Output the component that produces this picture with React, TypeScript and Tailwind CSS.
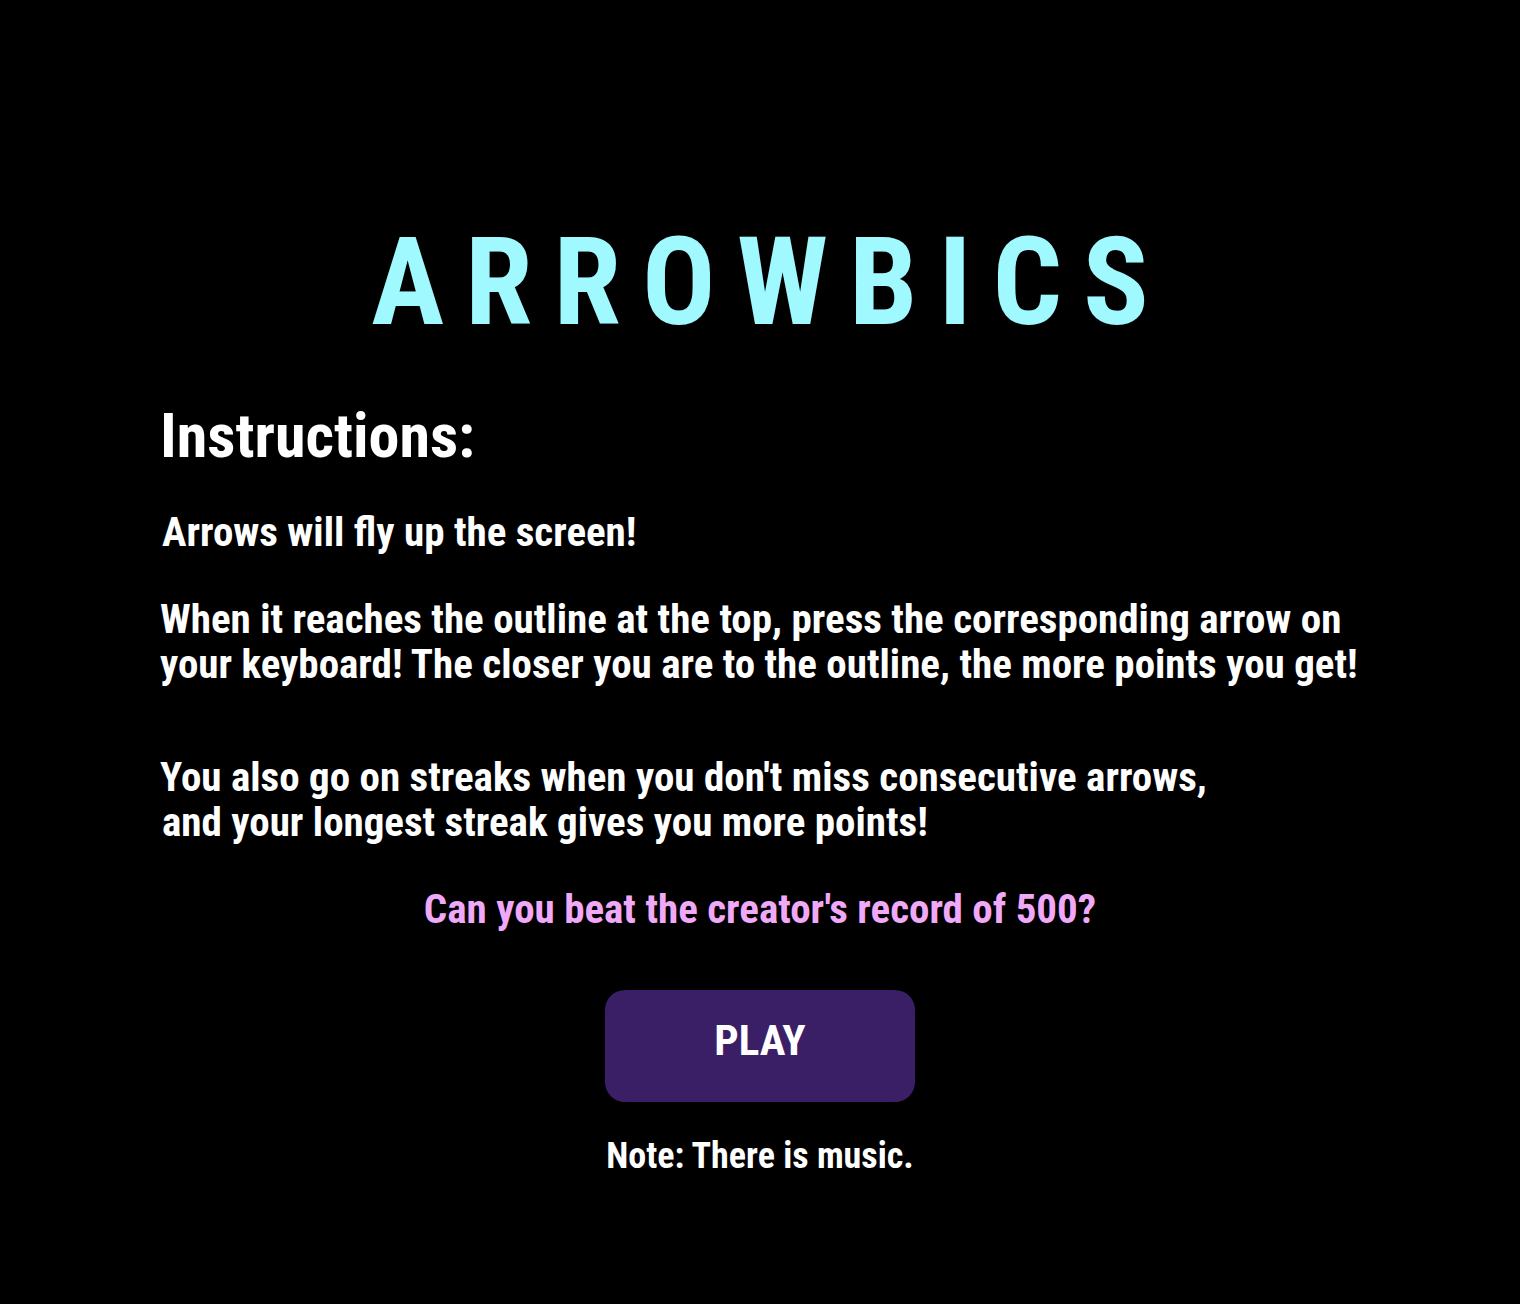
export default function App() {
  return (
    <div className="min-h-[1304px] w-full bg-black text-white font-[Roboto] font-stretch-condensed font-bold">
      <div className="pt-[222px]">
        <h1 className="text-center text-[122px] leading-[122px] text-[#9ff9ff] tracking-[21px] pl-[21px]">
          ARROWBICS
        </h1>
      </div>
      <div className="px-[160px]">
        <h2 className="mt-[61px] text-[62px] leading-[62px]">Instructions:</h2>
        <p className="mt-[43px] pl-[2px] text-[41px] leading-[45px]">Arrows will fly up the screen!</p>
        <p className="mt-[42px] text-[41px] leading-[45px]">
          When it reaches the outline at the top, press the corresponding arrow on
          <br />
          your keyboard! The closer you are to the outline, the more points you get!
        </p>
        <p className="mt-[68px] text-[41px] leading-[45px]">
          You also go on streaks when you don't miss consecutive arrows,
          <br />
          <span className="pl-[2px]">and your longest streak gives you more points!</span>
        </p>
      </div>
      <p className="mt-[42px] text-center text-[41px] leading-[45px] text-[#f0a9f8]">
        Can you beat the creator's record of 500?
      </p>
      <div className="mt-[58px] flex justify-center">
        <button className="w-[310px] h-[112px] pb-[12px] rounded-[20px] bg-[#3a1e66] text-[43px] text-white">
          PLAY
        </button>
      </div>
      <p className="mt-[32px] text-center text-[36px] leading-[45px]">Note: There is music.</p>
    </div>
  );
}
